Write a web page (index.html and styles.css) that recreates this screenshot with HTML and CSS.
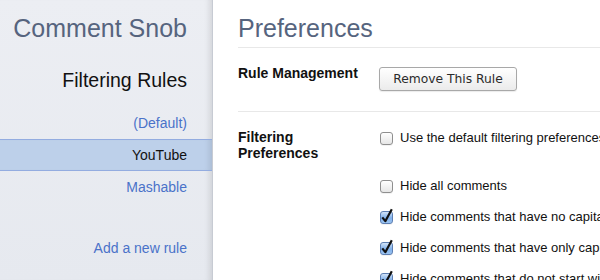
FILE: index.html
```html
<!DOCTYPE html>
<html>
<head>
<meta charset="utf-8">
<link rel="stylesheet" href="styles.css">
</head>
<body>
<div class="app">
  <nav class="sidebar">
    <h1 class="brand">Comment Snob</h1>
    <h2 class="nav-title">Filtering Rules</h2>
    <ul class="rules">
      <li class="rule"><a>(Default)</a></li>
      <li class="rule selected"><a>YouTube</a></li>
      <li class="rule"><a>Mashable</a></li>
    </ul>
    <div class="add-rule"><a>Add a new rule</a></div>
  </nav>
  <main class="main">
    <h1 class="page-title">Preferences</h1>
    <section class="section mgmt">
      <div class="label">Rule Management</div>
      <div class="controls"><button class="btn">Remove This Rule</button></div>
    </section>
    <section class="section filtering">
      <div class="label">Filtering<br>Preferences</div>
      <div class="controls">
        <label class="opt first">
          <span class="cb"></span>Use the default filtering preferences
        </label>
        <label class="opt">
          <span class="cb"></span>Hide all comments
        </label>
        <label class="opt">
          <span class="cb checked"><svg width="13" height="13" viewBox="0 0 13 13"><path d="M2.3 6.3 L5.3 10.2 L11.8 -1.8" /></svg></span>Hide comments that have no capital letters
        </label>
        <label class="opt">
          <span class="cb checked"><svg width="13" height="13" viewBox="0 0 13 13"><path d="M2.3 6.3 L5.3 10.2 L11.8 -1.8" /></svg></span>Hide comments that have only capital letters
        </label>
        <label class="opt">
          <span class="cb checked"><svg width="13" height="13" viewBox="0 0 13 13"><path d="M2.3 6.3 L5.3 10.2 L11.8 -1.8" /></svg></span>Hide comments that do not start with a capital letter
        </label>
      </div>
    </section>
  </main>
</div>
</body>
</html>
```
FILE: styles.css
```css
html, body {
  margin: 0;
  padding: 0;
  width: 600px;
  height: 280px;
  overflow: hidden;
  background: #fff;
  font-family: "Liberation Sans", Arial, sans-serif;
}
.app {
  display: flex;
  height: 280px;
}
.sidebar {
  width: 212px;
  flex: none;
  background: linear-gradient(#eceef3, #e6e9ef);
  border-right: 1px solid #c7cbd3;
  box-shadow: inset -7px 0 6px -5px rgba(0, 0, 0, 0.12);
  text-align: right;
}
.brand {
  margin: 0;
  padding: 13px 25px 0 0;
  font-size: 25px;
  line-height: 30px;
  font-weight: normal;
  color: #56647e;
}
.nav-title {
  margin: 25px 0 0;
  padding-right: 25px;
  font-size: 19.5px;
  line-height: 24px;
  font-weight: normal;
  color: #111;
}
.rules {
  list-style: none;
  margin: 15px 0 0;
  padding: 0;
}
.rule {
  height: 32px;
  line-height: 32px;
  font-size: 14px;
  padding-right: 25px;
  box-sizing: border-box;
}
.rule a, .add-rule a {
  color: #4a72c9;
}
.rule.selected {
  background: #bdd0ea;
  border-top: 1px solid #93ace0;
  border-bottom: 1px solid #93ace0;
  line-height: 30px;
  box-shadow: inset -7px 0 6px -5px rgba(0, 0, 0, 0.12);
}
.rule.selected a {
  color: #111;
}
.add-rule {
  margin-top: 29px;
  height: 32px;
  line-height: 32px;
  font-size: 14px;
  padding-right: 25px;
}
.main {
  flex: 1;
  min-width: 0;
  padding-left: 25px;
  overflow: hidden;
}
.page-title {
  margin: 0;
  padding: 13px 0 4px;
  font-size: 25px;
  line-height: 30px;
  font-weight: normal;
  color: #56647e;
  border-bottom: 1px solid #e8e8e8;
}
.section {
  display: flex;
  align-items: flex-start;
}
.label {
  width: 141px;
  flex: none;
  font-size: 14px;
  font-weight: bold;
  color: #111;
}
.mgmt {
  padding: 16px 0 20px;
  border-bottom: 1px solid #e8e8e8;
}
.mgmt .label {
  line-height: 18px;
}
.btn {
  margin: 3px 0 0;
  height: 24px;
  width: 138px;
  padding: 0;
  font-family: "DejaVu Sans", sans-serif;
  font-size: 12.3px;
  color: #2b2b2b;
  background: linear-gradient(#ffffff, #ebebeb);
  border: 1px solid #a8a8a8;
  border-radius: 3px;
  box-shadow: 0 1px 1px rgba(0, 0, 0, 0.08);
}
.filtering {
  padding-top: 17px;
}
.filtering .label {
  line-height: 16px;
}
.controls {
  display: flex;
  flex-direction: column;
}
.opt {
  display: flex;
  align-items: center;
  height: 18px;
  margin-bottom: 13px;
  font-size: 13px;
  line-height: 18px;
  color: #111;
  white-space: nowrap;
}
.opt.first {
  margin-bottom: 30px;
}
.cb {
  width: 11px;
  height: 11px;
  margin: 0 7px 0 1px;
  border: 1px solid #8f8f8f;
  border-radius: 3px;
  background: linear-gradient(#ffffff, #e6e6e6);
  box-shadow: 0 1px 0 rgba(0, 0, 0, 0.05);
  flex: none;
  position: relative;
}
.cb.checked {
  border-color: #5d7fb3;
  background: linear-gradient(#d3e4f8, #7fb0eb 55%, #9cc4f1);
}
.cb svg {
  position: absolute;
  left: -1px;
  top: -1px;
  overflow: visible;
}
.cb path {
  fill: none;
  stroke: #111;
  stroke-width: 2.2;
  stroke-linejoin: round;
  stroke-linecap: butt;
}
```
